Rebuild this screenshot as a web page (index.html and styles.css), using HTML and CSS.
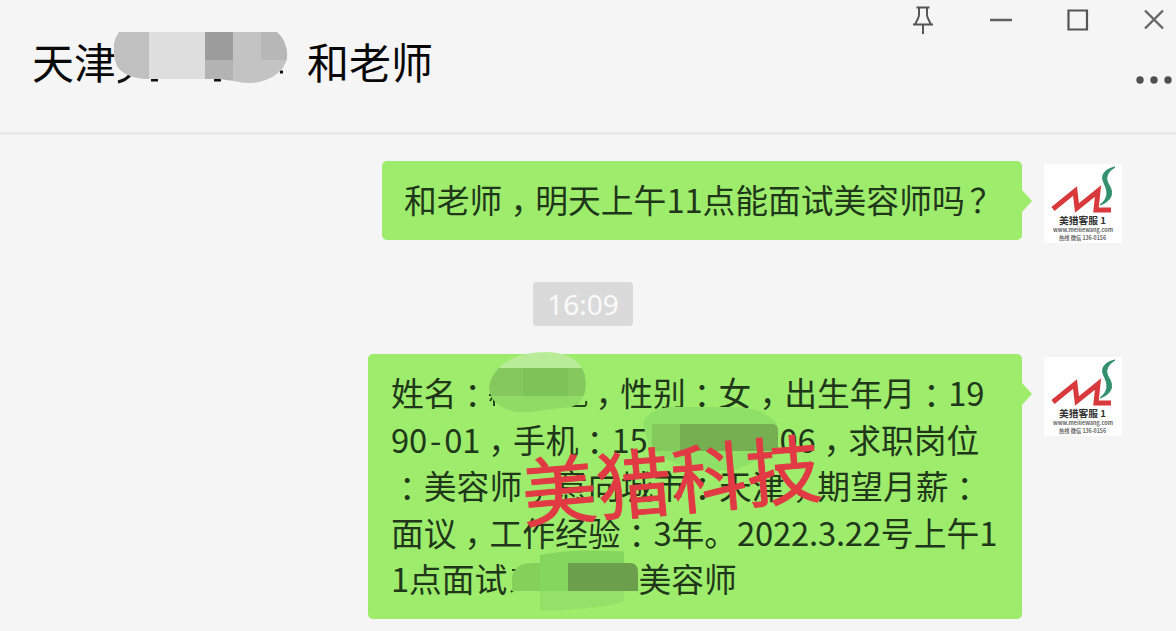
FILE: index.html
```
<!DOCTYPE html>
<html lang="zh-CN">
<head>
<meta charset="UTF-8">
<title>和老师</title>
<link rel="stylesheet" href="styles.css">
</head>
<body>

<div class="chat">
	<div class="header">
		<div class="title">
			<span>天津</span>
			<svg class="title-mask" width="174" height="60" viewBox="0 0 174 60">
				<g stroke="#111" stroke-width="3" fill="none">
					<path d="M4 53 Q12 51 16 46M37 51h7M100 51h7M166 43h3"/>
				</g>
				<clipPath id="m1"><path d="M5 3H163Q174 13 173 29Q171 40 160 47Q141 58 120 52L105 50L30 50Q10 48 3 37Q-5 17 5 3Z"/></clipPath>
				<g clip-path="url(#m1)">
					<path fill="#c0c0c0" d="M0 0h35v60H0z"/>
					<path fill="#dedede" d="M35 0h56v60H35z"/>
					<path fill="#9c9c9c" d="M91 0h28v31H91z"/>
					<path fill="#b3b3b3" d="M91 31h28v29H91z"/>
					<path fill="#c3c3c3" d="M119 0h55v60h-55z"/>
					<path fill="#b7b7b7" d="M147 0h27v31h-27z"/>
				</g>
			</svg>
			<span>和老师</span>
		</div>
		<div class="tools">
			<div class="window-buttons">
				<svg width="24" height="30" viewBox="0 0 24 30"><path d="M5.500 3.500h13M8 4v7q0 2-4 9.500h16q-4-7.500-4-9.500V4M2 20.500h20M12 21v10" fill="none" stroke="#555" stroke-width="2"/></svg>
				<svg width="22" height="30" viewBox="0 0 22 30"><path d="M0 16h22" stroke="#606060" stroke-width="2.500"/></svg>
				<svg width="22" height="30" viewBox="0 0 22 30"><path d="M1.500 6.500h18.500v19H1.500z" fill="none" stroke="#555" stroke-width="2.200"/></svg>
				<svg width="20" height="30" viewBox="0 0 20 30"><path d="M1 6.500l18 18M19 6.500l-18 18" stroke="#666" stroke-width="2.400"/></svg>
			</div>
			<svg class="more" width="36" height="10" viewBox="0 0 36 10"><g fill="#505050"><circle cx="4" cy="5" r="3.700"/><circle cx="18" cy="5" r="3.700"/><circle cx="32" cy="5" r="3.700"/></g></svg>
		</div>
	</div>

	<div class="messages">
		<div class="message">
			<div class="bubble short">
				<p>和老师<i>，</i>明天上午<b>11</b>点能面试美容师吗<em>？</em></p>
			</div>
			<svg class="avatar" width="78" height="79" viewBox="0 0 78 79">
				<path d="M9 45L31 27L33 44L54 27L52 46H67" fill="none" stroke="#d8393c" stroke-width="5"/>
				<path d="M71 3C61 5 56 11 60 19C64 27 65 34 56 41C68 37 70 29 65 21C60 13 64 8 71 3Z" fill="#32906f" stroke="#32906f"/>
				<text x="15" y="60" class="logo-name" textLength="47" lengthAdjust="spacingAndGlyphs">美猎客服 1</text>
				<text x="9" y="68" class="logo-small" textLength="60" lengthAdjust="spacingAndGlyphs">www.meiliewang.com</text>
				<text x="15" y="75.500" class="logo-small" textLength="47" lengthAdjust="spacingAndGlyphs">热线 微信 136-0156</text>
			</svg>
		</div>

		<div class="time">16:09</div>

		<div class="message">
			<div class="bubble long">
				<p>姓名<i>：</i><span class="gap name"></span><i>，</i>性别<i>：</i>女<i>，</i>出生年月<i>：</i><b>19</b></p>
				<p><b>90<span class="dash">-</span>01</b><i>，</i>手机<i>：</i><b>15</b><span class="gap phone"></span><b>06</b><i>，</i>求职岗位</p>
				<p><i>：</i>美容师<i>，</i>意向城市<i>：</i>天津<i>，</i>期望月薪<i>：</i></p>
				<p>面议<i>，</i>工作经验<i>：</i><b>3</b>年。<b>2022.3.22</b>号上午<b>1</b></p>
				<p><b>1</b>点面试<span class="gap company"></span>美容师</p>
				<svg class="masks" width="654" height="265" viewBox="368 354 654 265">
					<g fill="none" stroke="#27451b" stroke-width="2">
						<path d="M490 387l7-2M489 395h9M494 386v20M490 401l4-6M569 406h16q2-1 1-5M577 392v12M512 570h9M519 571v14l-8 7"/>
					</g>
					<clipPath id="m2"><path d="M490 383Q501 352 547 352Q573 353 581 367Q587 376 585 391Q581 408 563 408Q548 409 540 411Q510 415 499 405Q487 397 490 383Z"/></clipPath>
					<g clip-path="url(#m2)">
						<path fill="#b9ec98" d="M485 348h110v20H485z"/>
						<path fill="#7dc357" d="M485 368h110v28H485z"/>
						<path fill="#84c85e" d="M485 368h38v28h-38zM568 368h20v28h-20z"/>
						<path fill="#90db66" d="M485 396h110v20H485z"/>
					</g>
					<path fill="#8fe066" d="M643 424Q648 408 672 407L735 407Q765 408 777 424L777 452L735 470Q680 474 650 448Z"/>
					<path fill="#83c95c" d="M652 424h120q6 0 6 7v20H652z"/>
					<path fill="#76ae52" d="M680 424h92q6 0 6 7v20h-98z"/>
					<path fill="#94e16a" d="M540 558q25-9 84-7v50q-12 7-84 10z"/>
					<path fill="#83d05a" d="M512 577q3-14 20-14h36v28h-56z"/>
					<path fill="#85d65e" d="M540 555q36-7 84-3v12h-56v27h-28z"/>
					<path fill="#6c9f4b" d="M568 563h62q8 0 8 9v19h-70z"/>
				</svg>
				<div class="watermark">美猎科技</div>
			</div>
			<svg class="avatar" width="78" height="79" viewBox="0 0 78 79">
				<path d="M9 45L31 27L33 44L54 27L52 46H67" fill="none" stroke="#d8393c" stroke-width="5"/>
				<path d="M71 3C61 5 56 11 60 19C64 27 65 34 56 41C68 37 70 29 65 21C60 13 64 8 71 3Z" fill="#32906f" stroke="#32906f"/>
				<text x="15" y="60" class="logo-name" textLength="47" lengthAdjust="spacingAndGlyphs">美猎客服 1</text>
				<text x="9" y="68" class="logo-small" textLength="60" lengthAdjust="spacingAndGlyphs">www.meiliewang.com</text>
				<text x="15" y="75.500" class="logo-small" textLength="47" lengthAdjust="spacingAndGlyphs">热线 微信 136-0156</text>
			</svg>
		</div>
	</div>
</div>

</body>
</html>
```
FILE: styles.css
```
* {
	box-sizing: border-box;
}

body {
	margin: 0;
	background: #f5f5f5;
	font-family: "Noto Sans CJK SC", sans-serif;
	overflow: hidden;
}

.chat {
	width: 1176px;
	height: 631px;
	overflow: hidden;
}

.header {
	display: flex;
	justify-content: space-between;
	height: 135px;
	border-bottom: 3px solid #e9e9e9;
}

.title {
	display: flex;
	padding: 29px 0 0 32px;
	height: 100px;
	font-size: 42px;
	line-height: 63px;
	color: #080808;
}

.title-mask {
	margin: 0 19px 0 -2px;
}

.tools {
	display: flex;
	flex-direction: column;
	align-items: flex-end;
	padding-top: 4px;
}

.window-buttons {
	display: flex;
	gap: 55px;
	padding-right: 12px;
}

.more {
	margin: 41px 4px 0 0;
}

.messages {
	display: flex;
	flex-direction: column;
	padding: 26px 54px 0 0;
}

.message {
	display: flex;
	justify-content: flex-end;
	gap: 22px;
}

.bubble {
	position: relative;
	border-radius: 5px;
	background: #9eec6b;
	color: #20371a;
	font-size: 32.8px;
	line-height: 46.6px;
}

.bubble::after {
	content: "";
	position: absolute;
	left: 100%;
	top: 29px;
	border: 11px solid transparent;
	border-left: 10px solid #9eec6b;
	border-right: 0;
}

.short {
	width: 640px;
	height: 79px;
	padding: 15px 0 0 22px;
}

.long {
	width: 654px;
	height: 265px;
	padding: 15px 0 0 23px;
}

.bubble p {
	margin: 0;
	height: 46.6px;
	white-space: nowrap;
}

.bubble b {
	font-weight: normal;
	letter-spacing: -0.2px;
}

/* full-width punctuation sits in the middle of its cell */
.bubble i,
.bubble em {
	font-style: normal;
	padding-left: 8px;
	margin-right: -8px;
}

.bubble em {
	padding-left: 5px;
	margin-right: 0;
}

.dash {
	padding: 0 3px;
}

.gap {
	display: inline-block;
}

.name {
	width: 98px;
}

.phone {
	width: 132px;
}

.company {
	width: 131px;
}

.masks {
	position: absolute;
	left: 0;
	top: 0;
	overflow: visible;
}

.watermark {
	position: absolute;
	left: 153px;
	top: 73px;
	font-size: 75px;
	line-height: 100px;
	color: #e23a44;
	-webkit-text-stroke: 1px #e23a44;
	white-space: nowrap;
	transform: rotate(-5deg);
}

.avatar {
	flex: none;
	margin-top: 3px;
	background: #fff;
}

.time {
	width: 100px;
	height: 44px;
	margin: 39px 0 28px 533px;
	border-radius: 4px;
	background: #dadada;
	color: #fafafa;
	font: 28px/44px "Noto Sans", sans-serif;
	text-align: center;
}

.logo-name {
	font: bold 9px "Noto Sans CJK SC", sans-serif;
	fill: #333;
}

.logo-small {
	font: bold 5.5px "Noto Sans CJK SC", sans-serif;
	fill: #666;
}
```
